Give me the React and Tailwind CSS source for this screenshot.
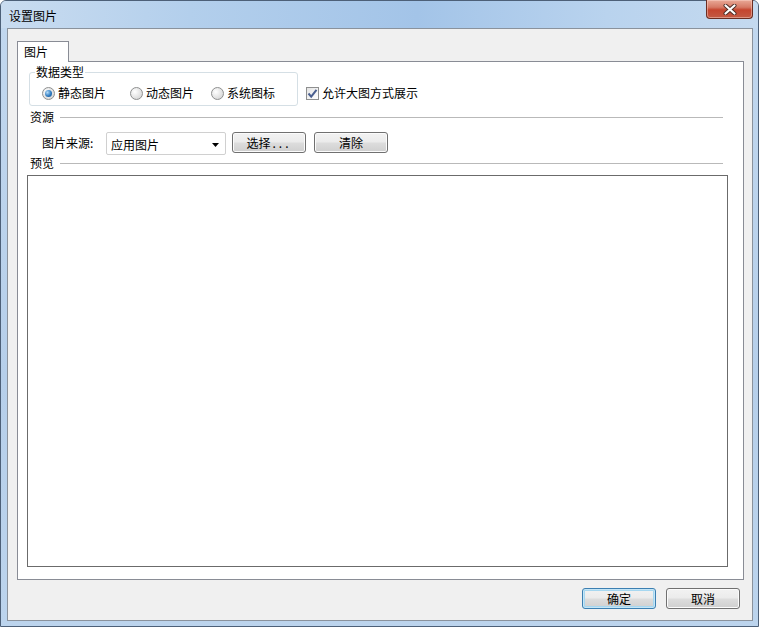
const font = "font-['Noto_Sans_CJK_SC','Liberation_Sans',sans-serif]";

function Radio({ checked, label, width }) {
  return (
    <div className="flex items-center gap-[3px] shrink-0" style={{ width }}>
      <span className="w-[13px] h-[13px] rounded-full border border-[#8e8f8f] bg-[radial-gradient(circle_at_35%_35%,#ffffff,#dcdcdc_70%,#c8c8c8)] flex items-center justify-center">
        {checked && (
          <span className="w-[7px] h-[7px] rounded-full bg-[radial-gradient(circle_at_35%_35%,#b5dcf8,#2f7bc0_55%,#0f4c8c)]" />
        )}
      </span>
      <span>{label}</span>
    </div>
  );
}

function WinButton({ children, focused, className = "" }) {
  return (
    <div
      className={`h-[21px] w-[74px] rounded-[3px] border flex items-center justify-center ${
        focused
          ? "border-[#3c7fb1] shadow-[inset_0_0_0_1px_#c5e6f7,inset_0_0_0_2px_#a6d7f0]"
          : "border-[#707070] shadow-[inset_0_0_0_1px_#fbfbfb]"
      } bg-[linear-gradient(#f2f2f2_0%,#ebebeb_48%,#dddddd_52%,#cfcfcf_100%)] ${className}`}
    >
      {children}
    </div>
  );
}

export default function App() {
  return (
    <div
      className={`w-[759px] h-[627px] flex flex-col rounded-t-[6px] border border-[#4d6078] bg-[linear-gradient(180deg,#c2d8ef,#b6cfea_60%,#bcd4ed)] text-[12px] leading-[16px] text-black ${font}`}
    >
      {/* Title bar */}
      <div className="h-[27px] shrink-0 flex items-start justify-between rounded-t-[5px] bg-[linear-gradient(90deg,#c9dcf0_0%,#b3cfec_25%,#a3c4e8_55%,#b9d3ee_80%,#c4d9ef_100%)]">
        <div className="pl-[8px] pt-[7px]">设置图片</div>
        <div className="mr-[5px] mt-[-1px] w-[47px] h-[19px] rounded-b-[4px] border border-t-0 border-[#6b2d22] bg-[linear-gradient(#e9a997_0%,#d67a66_40%,#c5452f_55%,#c35a44_100%)] shadow-[inset_0_0_0_1px_rgba(255,220,210,0.45)] flex items-center justify-center">
          <svg width="14" height="11" viewBox="0 0 14 11">
            <path d="M2.5 1.5 L11.5 9.5 M11.5 1.5 L2.5 9.5" stroke="#4a2a24" strokeWidth="4" strokeLinecap="round" />
            <path d="M2.5 1.5 L11.5 9.5 M11.5 1.5 L2.5 9.5" stroke="#ffffff" strokeWidth="2.2" strokeLinecap="round" />
          </svg>
        </div>
      </div>

      {/* Client area */}
      <div className="flex-1 ml-[6px] mr-[5px] mb-[5px] border border-[#8a929c] bg-[#f0f0f0] pl-[9px] pt-[12px] flex flex-col">
        {/* Tab header */}
        <div className="relative z-10 -mb-px w-[52px] h-[21px] border border-b-0 border-[#898c95] bg-white pl-[6px] pt-[2px]">
          图片
        </div>

        {/* Tab panel */}
        <div className="w-[727px] h-[519px] border border-[#898c95] bg-white flex flex-col">
          <div className="flex items-start mt-[10px] ml-[11px]">
            <div className="relative w-[269px] h-[34px] rounded-[3px] border border-[#d5dfe5]">
              <span className="absolute left-[5px] top-[-9px] bg-white px-[1px]">数据类型</span>
              <div className="flex items-center pt-[12px] pl-[12px]">
                <Radio checked label="静态图片" width={88} />
                <Radio label="动态图片" width={81} />
                <Radio label="系统图标" width={70} />
              </div>
            </div>
            <div className="flex items-center gap-[3px] ml-[8px] mt-[13px]">
              <span className="w-[13px] h-[13px] border border-[#8e8f8f] bg-[linear-gradient(135deg,#e4e4e4,#ffffff)] flex items-center justify-center">
                <svg width="11" height="11" viewBox="0 0 11 11">
                  <path d="M1.5 5.5 L4.2 8.6 L9.5 1.8" fill="none" stroke="#4a5f8f" strokeWidth="2" />
                </svg>
              </span>
              <span>允许大图方式展示</span>
            </div>
          </div>

          {/* 资源 */}
          <div className="flex items-center mt-[3px] ml-[12px] mr-[20px]">
            <span>资源</span>
            <div className="flex-1 ml-[6px] h-px bg-[#b9b9b9]" />
          </div>

          <div className="flex items-start mt-[7px] ml-[24px]">
            <span className="w-[64px] pt-[3px]">图片来源:</span>
            <div className="w-[120px] h-[23px] rounded-[2px] border border-[#d0d0d0] bg-white flex items-center justify-between pl-[4px] pr-[6px] pt-[3px]">
              <span>应用图片</span>
              <svg width="7" height="4" viewBox="0 0 7 4" className="mt-[-1px]">
                <path d="M0 0 H7 L3.5 4 Z" fill="#000" />
              </svg>
            </div>
            <WinButton className="ml-[6px] h-[20px]">
              选择<span className="tracking-[3px] ml-[2px]">...</span>
            </WinButton>
            <WinButton className="ml-[8px] h-[20px]">清除</WinButton>
          </div>

          {/* 预览 */}
          <div className="flex items-center ml-[12px] mr-[20px]">
            <span>预览</span>
            <div className="flex-1 ml-[6px] h-px bg-[#b9b9b9]" />
          </div>

          <div className="mt-[4px] ml-[9px] w-[701px] h-[392px] border border-[#6b6b6b] bg-white" />
        </div>

        {/* Bottom buttons */}
        <div className="w-[727px] flex justify-end gap-[10px] pr-[4px] mt-[8px]">
          <WinButton focused>确定</WinButton>
          <WinButton>取消</WinButton>
        </div>
      </div>
    </div>
  );
}
